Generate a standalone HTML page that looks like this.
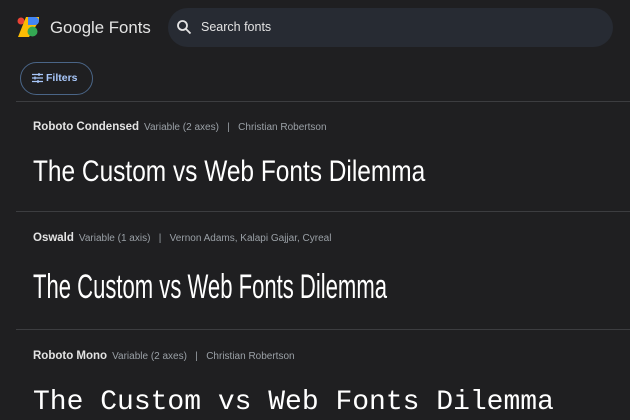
<!DOCTYPE html><html><head><style>
body{margin:0;width:630px;height:420px;overflow:hidden;background:#1f1f21;font-family:"Liberation Sans",sans-serif;color:#e3e3e3;position:relative}
.a{position:absolute;white-space:nowrap}
.line{position:absolute;left:16px;right:0;height:1px;background:#3c3d40}
.meta{font-size:10px;color:#9aa0a6}
.meta b{color:#e3e3e3;font-size:11.5px;margin-right:5px}
.h{font-size:30px;color:#fff;transform-origin:0 0;display:inline-block}
</style></head><body>
<svg class="a" style="left:17px;top:17px" width="22" height="20" viewBox="0 0 22 20">
<circle cx="4" cy="4" r="3.5" fill="#ea4335"/>
<polygon points="9,0 22,0 22,4 12,20 1,20" fill="#fbbc04"/>
<path d="M11 0h7a4 4 0 0 1 0 8h-7z" fill="#4285f4"/>
<circle cx="15.5" cy="14.5" r="5" fill="#34a853"/>
</svg>
<div class="a" style="left:50px;top:18px;font-size:16.8px;color:#e3e3e3">Google Fonts</div>
<div class="a" style="left:168px;top:8px;width:445px;height:39px;border-radius:20px;background:#272b33"></div>
<svg class="a" style="left:176px;top:19px" width="16" height="16" viewBox="0 0 16 16"><circle cx="6.5" cy="6.5" r="4.5" stroke="#e3e3e3" stroke-width="1.8" fill="none"/><path d="M10 10l4.5 4.5" stroke="#e3e3e3" stroke-width="1.8"/></svg>
<div class="a" style="left:201px;top:20px;font-size:12.5px;color:#e3e3e3">Search fonts</div>
<div class="a" style="left:20px;top:62px;width:71px;height:31px;border:1px solid #4a6587;border-radius:17px"></div>
<svg class="a" style="left:32px;top:73px" width="11" height="10" viewBox="0 0 11 10"><path d="M0 1.5h11M0 5h11M0 8.5h11" stroke="#a8c7fa" stroke-width="1.3"/><path d="M7 0v3M3 3.5v3M6 7v3" stroke="#a8c7fa" stroke-width="1.3"/></svg>
<div class="a" style="left:46px;top:72px;font-size:10.5px;font-weight:bold;color:#a8c7fa">Filters</div>
<div class="line" style="top:101px"></div>
<div class="a meta" style="left:33px;top:121px"><b>Roboto Condensed</b>Variable (2 axes) &nbsp;&nbsp;| &nbsp;&nbsp;Christian Robertson</div>
<div class="a" style="left:33px;top:155px"><span class="h" style="transform:scaleX(0.815)">The Custom vs Web Fonts Dilemma</span></div>
<div class="line" style="top:211px"></div>
<div class="a meta" style="left:33px;top:232px"><b>Oswald</b>Variable (1 axis) &nbsp;&nbsp;| &nbsp;&nbsp;Vernon Adams, Kalapi Gajjar, Cyreal</div>
<div class="a" style="left:33px;top:268px"><span class="h" style="font-size:34px;transform:scaleX(0.649)">The Custom vs Web Fonts Dilemma</span></div>
<div class="line" style="top:329px"></div>
<div class="a meta" style="left:33px;top:350px"><b>Roboto Mono</b>Variable (2 axes) &nbsp;&nbsp;| &nbsp;&nbsp;Christian Robertson</div>
<div class="a" style="left:33px;top:387px;font-family:'Liberation Mono',monospace;font-size:28px;color:#fff">The Custom vs Web Fonts Dilemma</div>
</body></html>
